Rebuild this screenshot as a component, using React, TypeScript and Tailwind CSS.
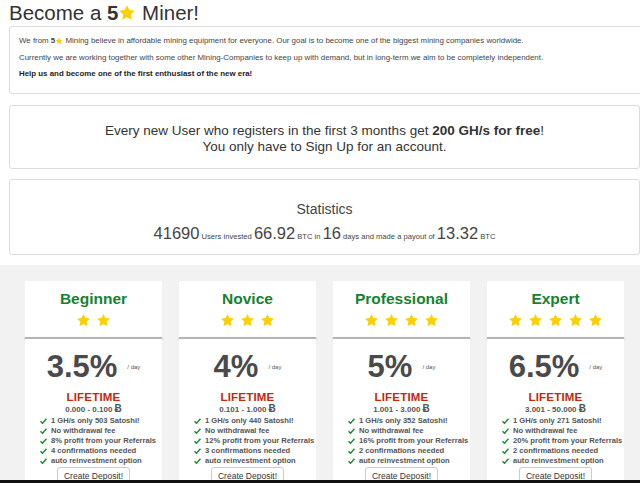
import React from 'react';

const Star = ({ size = 14 }: { size?: number }) => (
  <svg width={size} height={size} viewBox="0 0 24 24" className="inline-block shrink-0">
    <path
      d="M12 1.5l3.09 6.63 7.16.86-5.27 4.96 1.38 7.1L12 17.6l-6.36 3.45 1.38-7.1L1.75 9l7.16-.86z"
      fill="#fcd000"
    />
  </svg>
);

const Check = () => (
  <svg width="7" height="6" viewBox="0 0 14 12" className="shrink-0">
    <path d="M1 6.5l4 4L13 1.5" stroke="#1f8a36" strokeWidth="3" fill="none" />
  </svg>
);

interface Plan {
  name: string;
  stars: number;
  rate: string;
  range: string;
  satoshi: number;
  referral: number;
  confirmations: number;
}

const plans: Plan[] = [
  { name: 'Beginner', stars: 2, rate: '3.5%', range: '0.000 - 0.100', satoshi: 503, referral: 8, confirmations: 4 },
  { name: 'Novice', stars: 3, rate: '4%', range: '0.101 - 1.000', satoshi: 440, referral: 12, confirmations: 3 },
  { name: 'Professional', stars: 4, rate: '5%', range: '1.001 - 3.000', satoshi: 352, referral: 16, confirmations: 2 },
  { name: 'Expert', stars: 5, rate: '6.5%', range: '3.001 - 50.000', satoshi: 271, referral: 20, confirmations: 2 },
];

const PlanCard = ({ plan }: { plan: Plan }) => {
  const features = [
    `1 GH/s only ${plan.satoshi} Satoshi!`,
    'No withdrawal fee',
    `${plan.referral}% profit from your Referrals`,
    `${plan.confirmations} confirmations needed`,
    'auto reinvestment option',
  ];
  return (
    <div className="w-[137px] shrink-0 flex flex-col">
      <div className="h-[56px] shrink-0 bg-white flex flex-col items-center pt-[9px]">
        <h3 className="text-[15.5px] leading-[18px] font-bold text-[#15822f]">{plan.name}</h3>
        <div className="flex gap-[5px] mt-[5px]">
          {Array.from({ length: plan.stars }).map((_, i) => (
            <Star key={i} size={15} />
          ))}
        </div>
      </div>
      <div className="h-[2px] shrink-0 bg-[#b5b5b5] shadow-[0_1px_2px_rgba(0,0,0,0.35)]"></div>
      <div className="bg-white shrink-0 flex flex-col items-center pt-[10px] pb-[6px]">
        <div className="flex items-center">
          <span className="text-[31px] leading-[36px] font-bold text-[#4a4a4a]">{plan.rate}</span>
          <span className="ml-[10px] text-[6px] text-[#555] mt-[2px]">/ day</span>
        </div>
        <div className="mt-[5px] text-[11.5px] leading-[14px] font-bold text-[#c2290d] tracking-[0.2px]">LIFETIME</div>
        <div className="text-[8px] leading-[10px] font-bold text-[#555]">
          {plan.range} <span className="text-[10px]">Ƀ</span>
        </div>
        <ul className="mt-[1px] self-stretch pl-[15px] flex flex-col">
          {features.map((f, i) => (
            <li key={i} className="flex items-center gap-[4px] text-[7.6px] leading-[10px] font-bold text-[#555] whitespace-nowrap">
              <Check />
              {f}
            </li>
          ))}
        </ul>
        <button className="mt-[1px] h-[20px] px-[6px] border border-[#ccc] rounded-[3px] bg-white text-[8.5px] text-[#333]">
          Create Deposit!
        </button>
      </div>
    </div>
  );
};

export default function App() {
  return (
    <div className="w-[640px] h-[483px] overflow-hidden bg-white flex flex-col font-['Liberation_Sans',Arial,sans-serif] text-[#333]">
      <h1 className="pl-[9px] h-[26px] shrink-0 text-[20.5px] leading-[26px] flex items-center">
        Become a&nbsp;<b>5</b>
        <Star size={18} />
        &nbsp;Miner!
      </h1>
      <div className="ml-[9px] w-[640px] shrink-0 border border-[#dcdcdc] rounded-[3px] pl-[9px] pt-[6px] pb-[10px] text-[7.9px] leading-[16.5px] text-[#444]">
        <p className="flex items-center">
          We from&nbsp;<b>5</b>
          <Star size={8} />
          &nbsp;Mining believe in affordable mining equipment for everyone. Our goal is to become one of the biggest mining companies worldwide.
        </p>
        <p>
          Currently we are working together with some other Mining-Companies to keep up with demand, but in long-term we aim to be completely independent.
        </p>
        <p className="font-bold text-[#222]">Help us and become one of the first enthusiast of the new era!</p>
      </div>
      <div className="mt-[11px] ml-[9px] w-[631px] shrink-0 border border-[#dcdcdc] rounded-[3px] pt-[17px] pb-[13px] text-center text-[13.5px] leading-[16px] text-[#333]">
        <p>
          Every new User who registers in the first 3 months get <b>200 GH/s for free</b>!
        </p>
        <p>You only have to Sign Up for an account.</p>
      </div>
      <div className="mt-[10px] ml-[9px] w-[631px] shrink-0 border border-[#dcdcdc] rounded-[3px] pt-[21px] pb-[7px] text-center text-[#444]">
        <p className="text-[14px] leading-[16px]">Statistics</p>
        <p className="mt-[6px] text-[7.6px] leading-[20px]">
          <span className="text-[16.5px]">41690</span> Users invested <span className="text-[16.5px]">66.92</span> BTC in{' '}
          <span className="text-[16.5px]">16</span> days and made a payout of <span className="text-[16.5px]">13.32</span> BTC
        </p>
      </div>
      <div className="mt-[10px] flex-1 min-h-0 overflow-hidden bg-[#f2f2f2] pt-[16px] pl-[25px] flex items-start gap-[17px]">
        {plans.map((p) => (
          <PlanCard key={p.name} plan={p} />
        ))}
      </div>
      <div className="h-[3px] shrink-0 bg-[#111]"></div>
    </div>
  );
}
